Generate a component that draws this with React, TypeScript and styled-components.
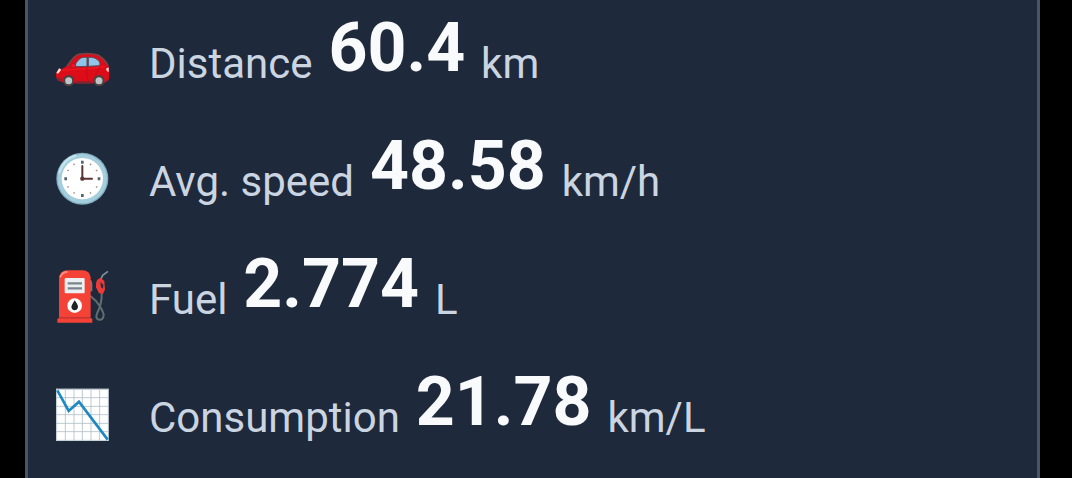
import React from 'react';
import styled, { createGlobalStyle } from 'styled-components';

const STATS = [
  { icon: <CarIcon />, label: 'Distance', value: '60.4', unit: 'km' },
  { icon: <ClockIcon />, label: 'Avg. speed', value: '48.58', unit: 'km/h' },
  { icon: <FuelIcon />, label: 'Fuel', value: '2.774', unit: 'L' },
  { icon: <ChartIcon />, label: 'Consumption', value: '21.78', unit: 'km/L' },
];

export default function App() {
  return (
    <>
      <GlobalStyle />
      <Panel>
        {STATS.map((stat) => (
          <Row key={stat.label}>
            {stat.icon}
            <Text>
              {stat.label} <Value>{stat.value}</Value> {stat.unit}
            </Text>
          </Row>
        ))}
      </Panel>
    </>
  );
}

function CarIcon() {
  return (
    <Icon viewBox="0 -36 198 198">
      <path d="M20 95 L55 76 Q72 47 85 43 Q116 37 145 45 Q162 56 175 78 Q181 94 176 120 L164 128 L128 130 L74 130 L40 127 L23 121 Q15 108 20 95Z" fill="#dc0d18" />
      <path d="M51 79 Q73 46 86 43 Q118 37 144 45 Q162 55 175 77" fill="none" stroke="#784346" strokeWidth="5" />
      <path d="M74 77 Q85 55 99 52 L111 52 V79 L78 80Z" fill="#8fc5e9" stroke="#5c4c57" strokeWidth="3" />
      <path d="M115 52 Q137 50 148 65 Q152 72 148 77 L115 79Z" fill="#8fc5e9" stroke="#5c4c57" strokeWidth="3" />
      <path d="M35 91 Q73 88 112 86 L164 80" fill="none" stroke="#f01a24" strokeWidth="3" />
      <path d="M111 80 Q108 108 116 128 M151 80 L134 108" fill="none" stroke="#b90918" strokeWidth="2" />
      <ellipse cx="70" cy="77" rx="8" ry="6" fill="#ef1924" stroke="#9e1625" strokeWidth="2" />
      <path d="M19 99 L27 85 L33 88 Q33 95 24 101Z M168 86 L176 82 L176 96 L171 94Z" fill="#ffe0d6" />
      <path d="M18 112 L36 116 L36 126 L23 122Z M76 124 H125 V131 H77Z" fill="#812530" />
      <circle cx="56" cy="122" r="17" fill="#4c4142" />
      <circle cx="56" cy="122" r="10.5" fill="#bdc5c8" />
      <circle cx="147" cy="122" r="17" fill="#4c4142" />
      <circle cx="147" cy="122" r="10.5" fill="#bdc5c8" />
    </Icon>
  );
}

function ClockIcon() {
  return (
    <Icon viewBox="0 0 198 198">
      <circle cx="97" cy="98" r="78" fill="#82aebf" />
      <circle cx="97" cy="98" r="74" fill="#a4cddd" />
      <path d="M28 79 Q40 40 76 29" fill="none" stroke="#c5e3ed" strokeWidth="7" strokeLinecap="round" />
      <circle cx="97" cy="98" r="62" fill="#fff" />
      <path d="M93 44 h8 v9 h-8z M93 144 h8 v9 h-8z M43 94 h8 v9 h-8z M143 94 h8 v9 h-8z" fill="#526570" />
      <g fill="#a18b87">
        {[30, 60, 120, 150, 210, 240, 300, 330].map((angle) => (
          <rect key={angle} x="95" y="46" width="4" height="5" transform={`rotate(${angle} 97 98)`} />
        ))}
      </g>
      <path d="M97 98 V60 M97 98 H126" fill="none" stroke="#593534" strokeWidth="6" strokeLinecap="round" />
      <circle cx="97" cy="98" r="6.5" fill="#593534" />
    </Icon>
  );
}

function FuelIcon() {
  return (
    <Icon viewBox="0 6 198 198">
      <path d="M119 54 H123 Q127 57 127 68 V88 H119Z" fill="#737b80" />
      <path d="M120 101 L137 116 Q158 142 161 158 Q160 175 147 173 Q134 170 142 152 Q156 126 155 94" fill="none" stroke="#626d70" strokeWidth="6" />
      <path d="M174 28 L158 40 L151 55" fill="none" stroke="#819098" strokeWidth="5" />
      <path d="M141 54 L151 47 L163 57 L165 82 L159 96 L147 94 L138 76 Q136 64 141 54Z" fill="#ed3a36" />
      <path d="M151 60 L160 68 L159 80 L153 76Z" fill="#263043" />
      <path d="M27 50 Q30 25 53 25 H98 Q119 26 122 46 V166 H27Z" fill="#f44336" />
      <path d="M31 44 Q38 30 50 30" fill="none" stroke="#ff8a80" strokeWidth="6" strokeLinecap="round" />
      <rect x="44" y="48" width="60" height="46" rx="3" fill="#eceff1" />
      <path d="M53 64 H96 M53 79 H96" fill="none" stroke="#78868d" strokeWidth="7" />
      <circle cx="74" cy="131" r="22" fill="#fff" />
      <path d="M74 115 Q85 130 84 135 Q82 145 74 145 Q65 144 64 135 Q65 129 74 115Z" fill="#202326" />
      <path d="M29 166 H119 L127 171 V182 H22 V172Z" fill="#f44336" />
      <path d="M29 168 H119" fill="none" stroke="#bd2e31" strokeWidth="3" />
    </Icon>
  );
}

function ChartIcon() {
  return (
    <Icon viewBox="0 0 198 198">
      <path d="M18 20 H176 V177 H18Z" fill="#fff" />
      <path d="M20 20 V176 M46 20 V176 M72 20 V176 M97 20 V176 M123 20 V176 M149 20 V176 M175 20 V176 M18 22 H176 M18 47 H176 M18 73 H176 M18 98 H176 M18 124 H176 M18 149 H176 M18 175 H176" stroke="#b0bec5" strokeWidth="2.5" />
      <path d="M22 25 L56 87 L87 59 L173 173" fill="none" stroke="#1e88c0" strokeWidth="8" />
    </Icon>
  );
}

const GlobalStyle = createGlobalStyle`
  * {
    box-sizing: border-box;
  }

  body {
    margin: 0;
    background: #000;
    overflow: hidden;
  }
`;

const Panel = styled.main`
  height: 478px;
  margin: 0 32px 0 25px;
  padding: 2px 22px 0;
  border: solid #475569;
  border-width: 0 3px;
  background: #1e293b;
  overflow: hidden;
`;

const Row = styled.div`
  display: flex;
  align-items: center;
  height: 118px;
`;

const Icon = styled.svg`
  flex: none;
  width: 66px;
  height: 66px;
  margin-right: 33px;
`;

const Text = styled.p`
  margin: 5px 0 0;
  color: #cbd5e1;
  font-family: Roboto, sans-serif;
  font-size: 42px;
  line-height: 48px;
  white-space: nowrap;
`;

const Value = styled.strong`
  margin: 0 5.5px;
  color: #f8fafc;
  font-size: 68px;
  font-weight: 700;
  line-height: 0;
  vertical-align: 7px;
`;
